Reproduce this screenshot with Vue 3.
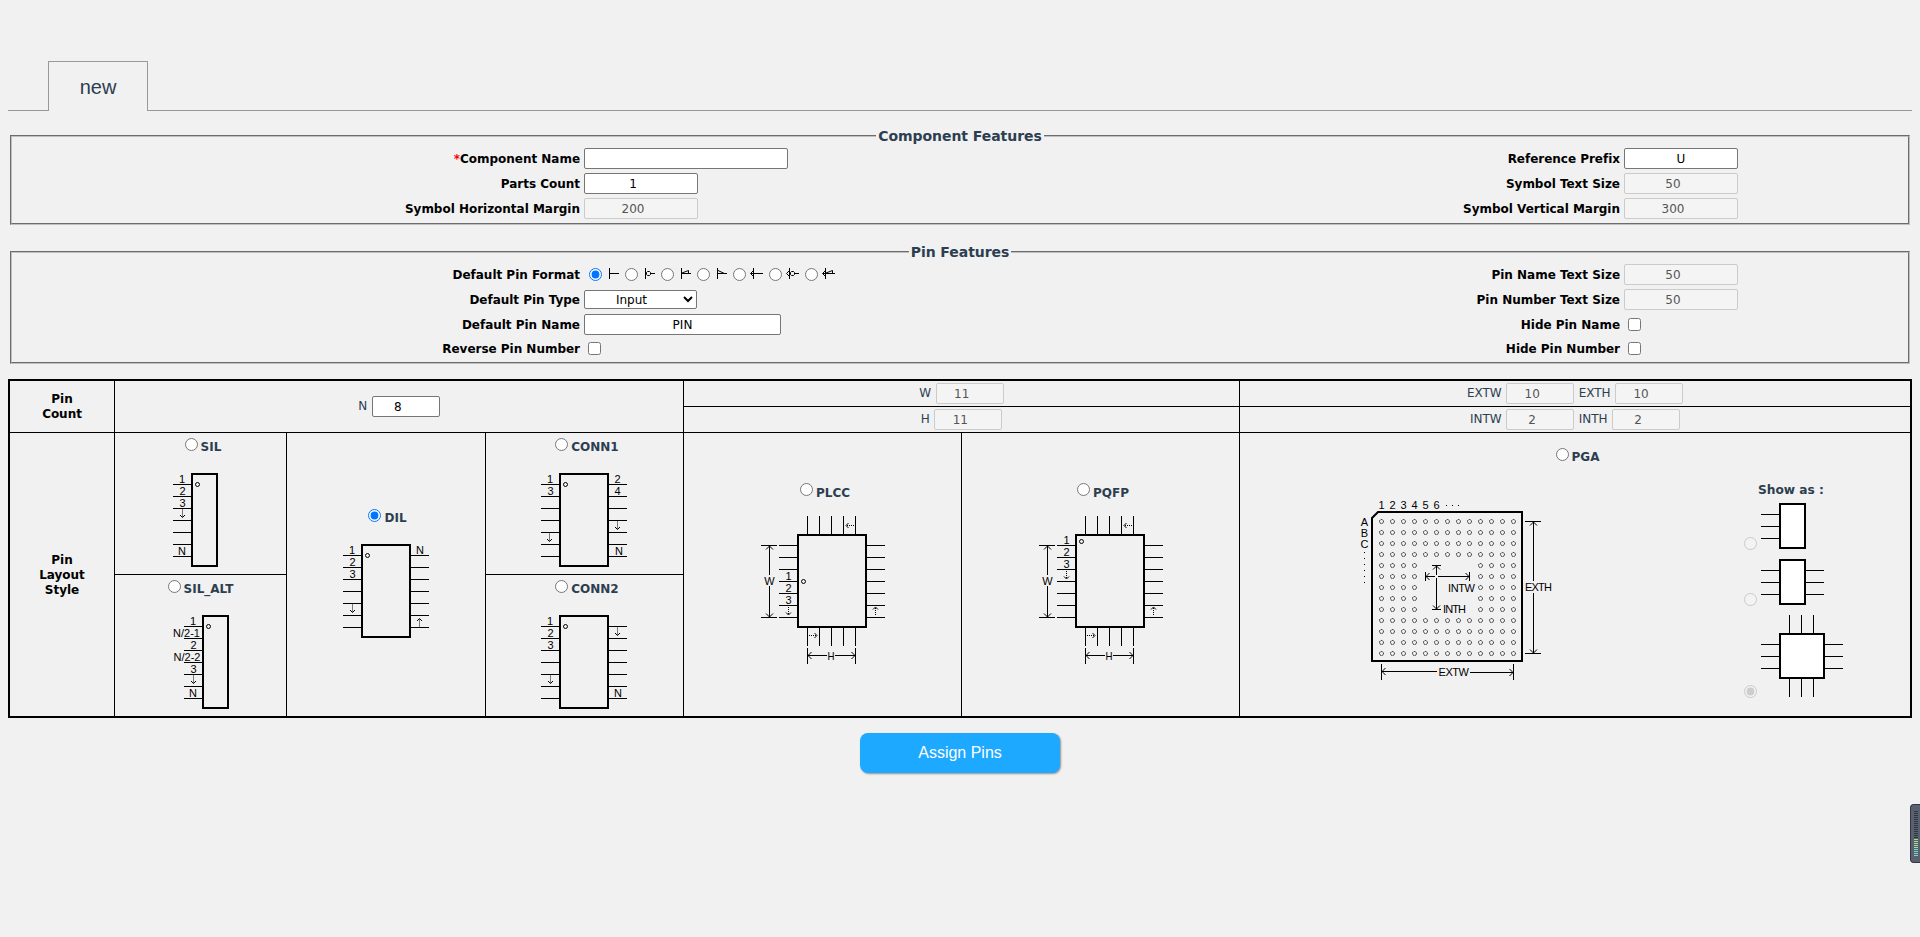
<script setup>
import { ref } from 'vue'

const left1 = [
  { label: 'Component Name', required: true, value: '', w: 'w204' },
  { label: 'Parts Count', value: '1', w: 'w114 num' },
  { label: 'Symbol Horizontal Margin', value: '200', w: 'w114 num', off: true },
]
const right1 = [
  { label: 'Reference Prefix', value: 'U', w: 'w114' },
  { label: 'Symbol Text Size', value: '50', w: 'w114 num', off: true },
  { label: 'Symbol Vertical Margin', value: '300', w: 'w114 num', off: true },
]
const format = ref(0)
const formats = [
  'M3.5 0V11M3.5 5.5H13',
  'M3.5 0V11M9 5.5H13M5.5 3.5H7.5L8.5 4.5V6.5L7.5 7.5H5.5L4.5 6.5V4.5Z',
  'M3.5 0V11M3.5 5.5H13M4 5L10.5 2.5V5.5',
  'M3.5 0V11M3.5 5.5H13M4 2.5L10.5 5.5',
  'M3.5 0V11M1 5.5H13M3 3L0.5 5.5L3 8',
  'M3.5 0V11M9 5.5H13M3 3L0.5 5.5L3 8M5.5 3.5H7.5L8.5 4.5V6.5L7.5 7.5H5.5L4.5 6.5V4.5Z',
  'M3.5 0V11M1 5.5H13M3 3L0.5 5.5L3 8M4 5L10.5 2.5V5.5',
]
const layout = ref('DIL')
const range = (n) => Array.from({ length: n }, (_, i) => i)

// Two-sided packages: text entries are [pin row, label, x], arrows are [x, y, angle]
const chips = [
  { id: 'SIL', cls: 'sil', w: 55, body: 18, bw: 27, pins: 0, right: false, text: [[0, '1', 9], [1, '2', 9.5], [2, '3', 9.5], [6, 'N', 9]], arrows: [[9.5, 40.5, 0]] },
  { id: 'DIL', cls: 'dil', w: 86, body: 18, bw: 50, pins: 0, right: true, text: [[0, '1', 9], [1, '2', 9.5], [2, '3', 9.5], [0, 'N', 77]], arrows: [[9.5, 64.5, 0], [76.5, 78.5, 180]] },
  { id: 'CONN1', cls: 'conn1', w: 86, body: 18, bw: 50, pins: 0, right: true, text: [[0, '1', 9], [1, '3', 9.5], [0, '2', 76.5], [1, '4', 76.5], [6, 'N', 78]], arrows: [[8.5, 64.5, 0], [76.5, 52.5, 0]] },
  { id: 'SIL_ALT', cls: 'silalt', w: 56, body: 29, bw: 27, pins: 11, right: false, text: [[0, '1', 20], [1, 'N/2-1', 13.5], [2, '2', 20.5], [3, 'N/2-2', 14], [4, '3', 20.5], [6, 'N', 20]], arrows: [[20.5, 64.5, 0]] },
  { id: 'CONN2', cls: 'conn2', w: 86, body: 18, bw: 50, pins: 0, right: true, text: [[0, '1', 9], [1, '2', 9.5], [2, '3', 9.5], [6, 'N', 77]], arrows: [[9.5, 64.5, 0], [76.5, 16.5, 0]] },
]
const quads = [
  { id: 'PLCC', cls: 'plcc', first: 3, dot: 65.5, arrow: 95 },
  { id: 'PQFP', cls: 'pqfp', first: 0, dot: 25.5, arrow: 59 },
]
const dots = []
for (let r = 0; r < 13; r++)
  for (let c = 0; c < 13; c++)
    if (!(r > 3 && r < 9 && c > 3 && c < 9)) dots.push([21.5 + c * 11, 21.5 + r * 11])
</script>

<template>
  <main class="page">
    <nav class="tabs"><div class="lead"></div><div class="tab">new</div><div class="rest"></div></nav>

    <fieldset class="one">
      <legend>Component Features</legend>
      <div v-for="(l, i) in left1" :key="l.label" class="row">
        <label><span v-if="l.required" class="star">*</span>{{ l.label }}</label>
        <div class="ctl"><input type="text" :class="l.w" :value="l.value" :disabled="l.off"></div>
        <label>{{ right1[i].label }}</label>
        <div class="ctl"><input type="text" :class="right1[i].w" :value="right1[i].value" :disabled="right1[i].off"></div>
      </div>
    </fieldset>

    <fieldset class="two">
      <legend>Pin Features</legend>
      <div class="row">
        <label>Default Pin Format</label>
        <div class="ctl formats">
          <span v-for="(d, i) in formats" :key="i" class="fmt">
            <input v-model="format" type="radio" name="format" :value="i">
            <svg width="15" height="13" viewBox="0 0 15 13"><path :d="d" class="fine" /></svg>
          </span>
        </div>
        <label>Pin Name Text Size</label>
        <div class="ctl"><input type="text" class="w114 num" value="50" disabled></div>
      </div>
      <div class="row">
        <label>Default Pin Type</label>
        <div class="ctl"><select><option>Input</option></select></div>
        <label>Pin Number Text Size</label>
        <div class="ctl"><input type="text" class="w114 num" value="50" disabled></div>
      </div>
      <div class="row">
        <label>Default Pin Name</label>
        <div class="ctl"><input type="text" class="w197" value="PIN"></div>
        <label>Hide Pin Name</label>
        <div class="ctl"><input type="checkbox"></div>
      </div>
      <div class="row last">
        <label>Reverse Pin Number</label>
        <div class="ctl"><input type="checkbox"></div>
        <label>Hide Pin Number</label>
        <div class="ctl"><input type="checkbox"></div>
      </div>
    </fieldset>

    <section class="grid">
      <div class="cell head count">Pin<br>Count</div>
      <div class="cell mid n"><span>N</span><input type="text" class="w68 num" value="8"></div>
      <div class="cell mid w"><span>W</span><input type="text" class="w68 num" value="11" disabled></div>
      <div class="cell mid h"><span>H</span><input type="text" class="w68 num" value="11" disabled></div>
      <div class="cell mid ext"><span>EXTW</span><input type="text" class="w68 num" value="10" disabled><span>EXTH</span><input type="text" class="w68 num" value="10" disabled></div>
      <div class="cell mid int"><span>INTW</span><input type="text" class="w68 num" value="2" disabled><span>INTH</span><input type="text" class="w68 num" value="2" disabled></div>
      <div class="cell head style">Pin<br>Layout<br>Style</div>

      <div v-for="c in chips" :key="c.id" class="cell pkg" :class="c.cls">
        <label class="opt"><input v-model="layout" type="radio" name="layout" :value="c.id"><b>{{ c.id }}</b></label>
        <svg :width="c.w" height="94" :viewBox="`0 0 ${c.w} 94`">
          <rect :x="c.body + 1" y="1" :width="c.bw - 2" height="92" class="body" />
          <circle :cx="c.body + 6.5" cy="11.5" r="2" class="ring" />
          <template v-for="i in range(7)" :key="i">
            <path :d="`M${c.pins} ${11.5 + 12 * i}h18`" class="pin" />
            <path v-if="c.right" :d="`M${c.body + c.bw} ${11.5 + 12 * i}h18`" class="pin" />
          </template>
          <text v-for="t in c.text" :key="t.join()" :x="t[2]" :y="10 + 12 * t[0]" text-anchor="middle">{{ t[1] }}</text>
          <g v-for="a in c.arrows" :key="a.join()" :transform="`translate(${a[0]} ${a[1]}) rotate(${a[2]})`">
            <path d="M0 -4V4" class="dash" /><path d="M-2.500 1.500L0 4L2.500 1.500" class="fine" />
          </g>
        </svg>
      </div>

      <div v-for="q in quads" :key="q.id" class="cell pkg" :class="q.cls">
        <label class="opt"><input v-model="layout" type="radio" name="layout" :value="q.id"><b>{{ q.id }}</b></label>
        <svg width="124" height="148" viewBox="0 0 124 148">
          <rect x="37" y="19" width="68" height="92" class="body" />
          <circle cx="42.500" :cy="q.dot" r="2" class="ring" />
          <path v-for="i in range(7)" :key="i" :d="`M18 ${29.5 + 12 * i}h18m70 0h18`" class="pin" />
          <path v-for="i in range(5)" :key="'v' + i" :d="`M${46.5 + 12 * i} 0v18m0 94v18`" class="pin" />
          <text v-for="i in range(3)" :key="'t' + i" x="27.500" :y="28 + 12 * (q.first + i)" text-anchor="middle">{{ i + 1 }}</text>
          <path d="M0 29.500H16M0 101.500H16M8.500 30V59M8.500 70V101M46.500 132V148M94.500 132V148M47 139.500H66M74 139.500H94" class="pin" />
          <path d="M5 33.500L8.500 30L12 33.500M5 97.500L8.500 101L12 97.500M50.500 136L47 139.500L50.500 143M90.500 136L94 139.500L90.500 143" class="fine" />
          <text x="8.500" y="69" text-anchor="middle">W</text>
          <text x="66.500" y="143.500" textLength="7" lengthAdjust="spacingAndGlyphs">H</text>
          <g v-for="a in [[27.5, q.arrow, 0], [114.5, 95, 180], [89, 9.5, 90], [52, 119.5, -90]]" :key="a.join()" :transform="`translate(${a[0]} ${a[1]}) rotate(${a[2]})`">
            <path d="M0 -4V4" class="dash" /><path d="M-2.500 1.500L0 4L2.500 1.500" class="fine" />
          </g>
        </svg>
      </div>

      <div class="cell pga">
        <label class="opt"><input v-model="layout" type="radio" name="layout" value="PGA"><b>PGA</b></label>
        <div class="pgabody">
          <svg class="array" width="192" height="180" viewBox="0 0 192 180">
            <path d="M12 18L18 12H162V161H12Z" class="body" />
            <circle v-for="d in dots" :key="d.join()" :cx="d[0]" :cy="d[1]" r="2" class="hole" />
            <text v-for="i in range(6)" :key="i" :x="21.5 + 11 * i" y="9" text-anchor="middle">{{ i + 1 }}</text>
            <text v-for="(l, i) in ['A', 'B', 'C']" :key="l" x="4.500" :y="26 + 11 * i" text-anchor="middle">{{ l }}</text>
            <path d="M86 5.500h1m5 0h1m5 0h1M4 52.500h1M4 58.500h1M4 64.500h1M4 70.500h1M4 76.500h1M4 82.500h1" class="pin" />
            <path d="M65.500 72V81M109.500 72V81M66 76.500H75M78 76.500H109M72 65.500H81M72 109.500H81M76.500 66V75M76.500 78V109" class="pin" />
            <path d="M69.500 73L66 76.500L69.500 80M105.500 73L109 76.500L105.500 80M73 69.500L76.500 66L80 69.500M73 105.500L76.500 109L80 105.500" class="fine" />
            <path d="M165 21.500H181M165 153.500H181M173.500 22V81M173.500 93V153M21.500 164V180M153.500 164V180M22 171.500H77M110 172.500H153" class="pin" />
            <path d="M170 25.500L173.500 22L177 25.500M170 149.500L173.500 153L177 149.500M25.500 168L22 171.500L25.500 175M149.500 169L153 172.500L149.500 176" class="fine" />
            <text x="88" y="92" textLength="27">INTW</text>
            <text x="83" y="113" textLength="23">INTH</text>
            <text x="165" y="91" textLength="27">EXTH</text>
            <text x="78.500" y="176" textLength="30.500">EXTW</text>
          </svg>
          <div class="show">
            <b class="title">Show as :</b>
            <div class="choice">
              <input type="radio" name="show" disabled>
              <svg width="45" height="46" viewBox="0 0 45 46"><rect x="19" y="1" width="25" height="44" class="body white" /><path d="M0 11.500H18M0 23.500H18M0 35.500H18" class="pin" /></svg>
            </div>
            <div class="choice">
              <input type="radio" name="show" disabled>
              <svg width="63" height="46" viewBox="0 0 63 46"><rect x="19" y="1" width="25" height="44" class="body white" /><path d="M0 11.500H18M0 23.500H18M0 35.500H18M45 11.500H63M45 23.500H63M45 35.500H63" class="pin" /></svg>
            </div>
            <div class="choice">
              <input type="radio" name="show" disabled checked>
              <svg width="82" height="82" viewBox="0 0 82 82"><rect x="19" y="19" width="44" height="44" class="body white" /><path d="M0 29.500H18M0 41.500H18M0 53.500H18M64 29.500H82M64 41.500H82M64 53.500H82M28.500 0V18M40.500 0V18M52.500 0V18M28.500 64V82M40.500 64V82M52.500 64V82" class="pin" /></svg>
            </div>
          </div>
        </div>
      </div>
    </section>

    <button class="assign" type="button">Assign Pins</button>

    <aside class="meter"><i v-for="i in range(23)" :key="i" :class="{ on: i > 13, cool: i > 18 }"></i></aside>
  </main>
</template>

<style>
html, body { background: #f1f1f1; }
</style>

<style scoped>
.page { box-sizing: border-box; height: 937px; padding: 61px 8px 0; overflow: hidden; color: #2c3e50; font: 12px/15px Verdana, "DejaVu Sans", sans-serif; }
.page * { box-sizing: border-box; }
.tabs { display: flex; height: 50px; margin-bottom: 16px; }
.lead { width: 40px; border-bottom: 1px solid #999; }
.tab { width: 100px; border: 1px solid #999; border-bottom: 0; text-align: center; font: 20px/50px "Liberation Sans", Arial, sans-serif; }
.rest { flex: 1; border-bottom: 1px solid #999; }
fieldset { margin: 0 2px; padding: 1px 0 2px; border: 2px groove rgb(192, 192, 192); }
.one { margin-bottom: 18px; }
.two { margin-bottom: 15px; }
legend { margin: 0 auto; padding: 0 2px; height: 18px; font-size: 14px; line-height: 18px; font-weight: bold; letter-spacing: -0.05px; }
.row { display: grid; grid-template-columns: 568px 600px 432px 1fr; column-gap: 4px; height: 25px; align-items: center; }
.row.last { height: 23px; }
.row label { padding-top: 1px; text-align: right; color: #000; font-weight: bold; letter-spacing: -0.02px; white-space: nowrap; }
.star { color: red; }
.ctl { display: flex; align-items: center; }
input, select { margin: 0; font: 12px Verdana, "DejaVu Sans", sans-serif; }
input[type=text] { height: 21px; padding: 1px; border: 1px solid #767676; border-radius: 2px; background: #fff; color: #000; text-align: center; }
input[type=text]:disabled { border-color: #cbcbcb; background: #f4f4f4; color: #545454; }
input[type=text].num { padding-right: 17px; }
.w204 { width: 204px; }
.w197 { width: 197px; }
.w114 { width: 114px; }
.w68 { width: 68px; }
select { width: 113px; height: 19px; padding-right: 6px; text-align: center; border: 1px solid #767676; border-radius: 2px; background: #fff; color: #000; }
input[type=checkbox] { width: 13px; height: 13px; margin-left: 4px; }
input[type=radio] { width: 13px; height: 13px; flex: none; }
.formats { padding-left: 5px; }
.fmt { display: flex; align-items: center; width: 36px; gap: 4px; }
svg { display: block; overflow: visible; flex: none; }
.fine { fill: none; stroke: #000; stroke-width: 1; }
.dash { fill: none; stroke: #000; stroke-dasharray: 1 1; }
.ring { fill: none; stroke: #000; }
.hole { fill: none; stroke: #000; stroke-width: 1; stroke-dasharray: 1.05 0.52; }
.pin { fill: none; stroke: #000; shape-rendering: crispEdges; }
.body { fill: none; stroke: #000; stroke-width: 2; }
.white { fill: #fff; }
svg text { font: 11px "Liberation Sans", Arial, sans-serif; fill: #000; }
.grid { display: grid; grid-template-columns: 105px 172px 199px 198px 278px 278px 670px; grid-template-rows: 26px 26px 142px 141px; border: 2px solid #000; }
.cell { border: 0 solid #000; border-width: 0 1px 1px 0; min-width: 0; }
.head { display: flex; align-items: center; justify-content: center; text-align: center; color: #000; font-weight: bold; letter-spacing: -0.03px; }
.mid { display: flex; align-items: center; justify-content: center; gap: 4.5px; }
.count { grid-area: 1 / 1 / 3 / 2; }
.n { grid-area: 1 / 2 / 3 / 5; }
.w { grid-area: 1 / 5 / 2 / 7; }
.h { grid-area: 2 / 5 / 3 / 7; }
.ext { grid-area: 1 / 7; border-right: 0; }
.int { grid-area: 2 / 7; border-right: 0; }
.style { grid-area: 3 / 1 / 5 / 2; border-bottom: 0; padding-top: 1px; }
.sil { grid-area: 3 / 2; }
.silalt { grid-area: 4 / 2; border-bottom: 0; }
.dil { grid-area: 3 / 3 / 5 / 4; border-bottom: 0; }
.conn1 { grid-area: 3 / 4; }
.conn2 { grid-area: 4 / 4; border-bottom: 0; }
.plcc { grid-area: 3 / 5 / 5 / 6; border-bottom: 0; }
.pqfp { grid-area: 3 / 6 / 5 / 7; border-bottom: 0; }
.pga { grid-area: 3 / 7 / 5 / 8; border: 0; padding-top: 15px; }
.pkg { display: flex; flex-direction: column; align-items: center; padding-top: 5px; }
.pkg.dil { padding-top: 76px; }
.pkg.plcc, .pkg.pqfp { padding-top: 50px; }
.conn1 svg, .conn2 svg { margin-right: 1px; }
.silalt svg, .plcc svg, .pqfp svg { margin-left: 1px; }
.opt { display: flex; justify-content: center; gap: 3px; height: 35px; padding-left: 5px; font-size: 12px; }
.opt b { line-height: 18px; }
.dil .opt { padding-left: 3px; }
.silalt .opt { padding-left: 0; }
.plcc .opt, .pqfp .opt { height: 33px; }
.plcc .opt b, .pqfp .opt b { line-height: 20px; }
.pgabody { display: flex; justify-content: space-between; padding: 0 67px 0 120px; }
.array { margin-top: 17px; }
.show { width: 99px; }
.title { display: block; margin: 0 0 5px 14px; height: 15px; font-size: 12.2px; line-height: 14px; white-space: nowrap; }
.choice { display: flex; align-items: flex-end; gap: 4px; margin-bottom: 10px; }
.choice input { position: relative; top: 1px; }
.assign { display: block; width: 200px; height: 40px; margin: 15px auto 0; padding: 0; border: 0; border-radius: 8px; background: #1ca9ff; color: #fff; font: 16px "Liberation Sans", Arial, sans-serif; box-shadow: 1px 1px 2px rgba(0, 0, 0, 0.4); }
.meter { position: absolute; top: 804px; right: 0; width: 10px; height: 59px; padding: 6px 0 0 3px; border: 1px solid #33363f; border-right: 0; border-radius: 4px 0 0 4px; background: #596070; }
.meter i { display: block; width: 4px; height: 1px; margin-bottom: 1px; background: #303440; }
.meter i.on { background: #a4df98; }
.meter i.cool { background: #78d8c0; }
</style>
